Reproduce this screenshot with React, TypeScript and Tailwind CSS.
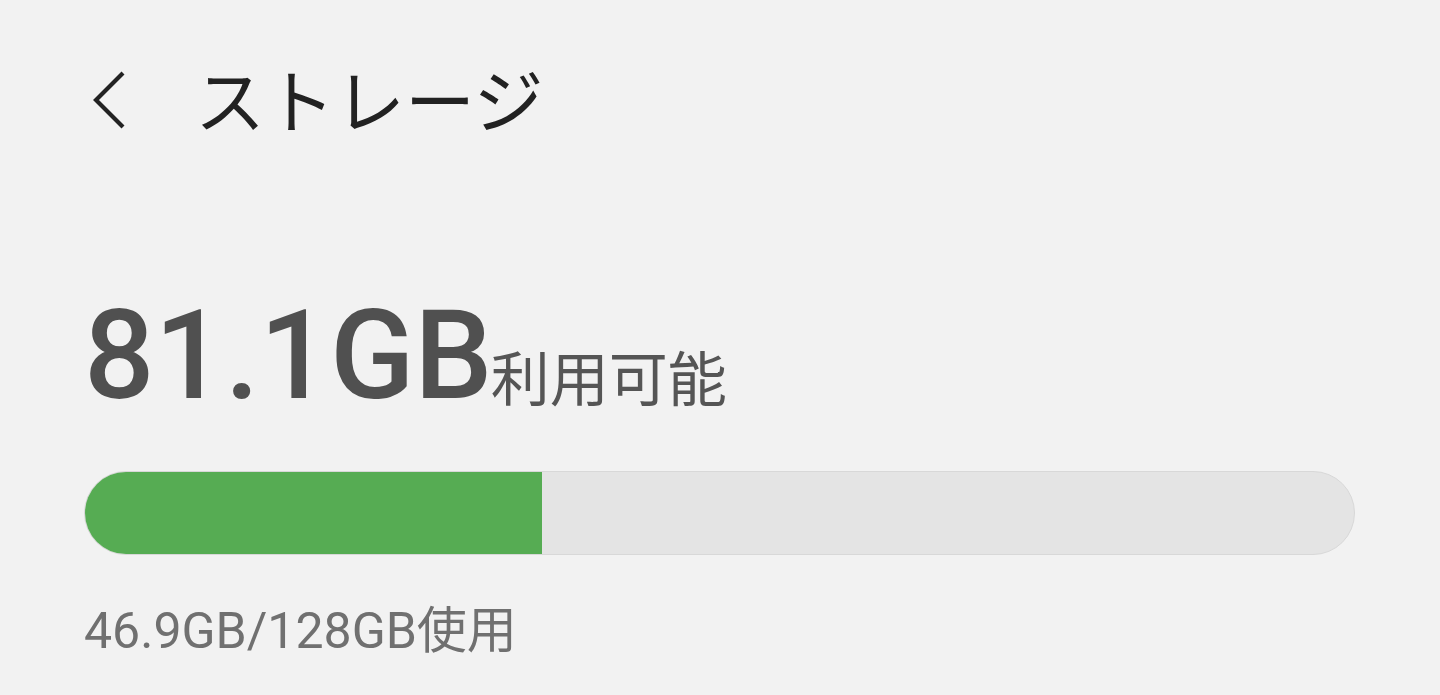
const total = 128
const used = 46.9

function BackIcon() {
  return (
    <svg width="40" height="64" viewBox="0 0 40 64" fill="none" className="text-[#222]">
      <path d="M33 4 L6 31 L33 58" stroke="currentColor" strokeWidth="4.2" strokeLinecap="butt" strokeLinejoin="miter" />
    </svg>
  )
}

export default function App() {
  const available = (total - used).toFixed(1)

  return (
    <div
      className="w-[1440px] h-[695px] bg-[#f2f2f2] overflow-hidden"
      style={{ fontFamily: 'Roboto, "Noto Sans CJK JP", sans-serif' }}
    >
      {/* Header */}
      <div className="flex items-start pl-[90px] pt-[69px] h-[150px]">
        <BackIcon />
        <h1 className="ml-[65px] -mt-[10px] text-[70px] leading-[90px] text-[#222] font-normal">ストレージ</h1>
      </div>

      {/* Available */}
      <div className="pl-[84px] mt-[151px] flex items-baseline">
        <span className="text-[124px] leading-[110px] font-medium text-[#505050]">
          {available}GB
        </span>
        <span className="-ml-[2px] text-[59px] text-[#555] leading-[60px] relative top-[3px]">利用可能</span>
      </div>

      {/* Bar */}
      <div className="mt-[60px] ml-[84px] w-[1271px] h-[84px] rounded-full bg-[#e4e4e4] border border-[#d8d8d8] overflow-hidden">
        <div className="h-full w-[36%] bg-[#56ac53]" />
      </div>

      <p className="pl-[84px] mt-[46px] text-[50px] leading-[60px] text-[#707070]">
        {used}GB/{total}GB使用
      </p>
    </div>
  )
}
